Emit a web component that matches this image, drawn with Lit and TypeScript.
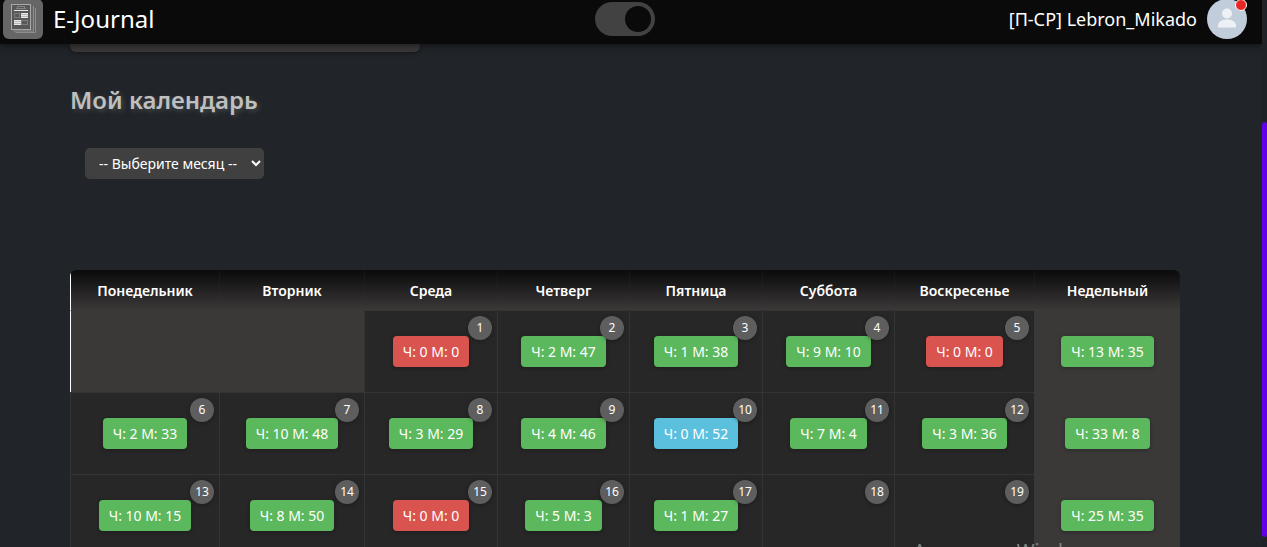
import { LitElement, html, css, svg, nothing } from "lit";
import { customElement } from "lit/decorators.js";

type Tone = "green" | "red" | "blue";
interface Entry {
  day?: number;
  text?: string;
  tone?: Tone;
}

const HEADINGS = ["Понедельник", "Вторник", "Среда", "Четверг", "Пятница", "Суббота", "Воскресенье", "Недельный"];

const d = (day: number, text?: string, tone: Tone = "green"): Entry => ({ day, text, tone });

const WEEKS: { skip: number; days: Entry[]; total: string }[] = [
  {
    skip: 2,
    days: [d(1, "Ч: 0 М: 0", "red"), d(2, "Ч: 2 М: 47"), d(3, "Ч: 1 М: 38"), d(4, "Ч: 9 М: 10"), d(5, "Ч: 0 М: 0", "red")],
    total: "Ч: 13 М: 35",
  },
  {
    skip: 0,
    days: [d(6, "Ч: 2 М: 33"), d(7, "Ч: 10 М: 48"), d(8, "Ч: 3 М: 29"), d(9, "Ч: 4 М: 46"), d(10, "Ч: 0 М: 52", "blue"), d(11, "Ч: 7 М: 4"), d(12, "Ч: 3 М: 36")],
    total: "Ч: 33 М: 8",
  },
  {
    skip: 0,
    days: [d(13, "Ч: 10 М: 15"), d(14, "Ч: 8 М: 50"), d(15, "Ч: 0 М: 0", "red"), d(16, "Ч: 5 М: 3"), d(17, "Ч: 1 М: 27"), d(18), d(19)],
    total: "Ч: 25 М: 35",
  },
];

@customElement("month-calendar")
export class MonthCalendar extends LitElement {
  static styles = css`
    :host {
      display: block;
    }
    .table {
      width: 100%;
      table-layout: fixed;
      border-collapse: separate;
      border-spacing: 0;
      border-radius: 6px 6px 0 0;
      overflow: hidden;
      background: #272727;
      color: #fff;
      font-size: 14px;
      line-height: 19px;
      text-align: center;
    }
    .c1 { width: 149px; }
    .c2 { width: 145px; }
    .c3 { width: 133px; }
    .c4 { width: 132px; }
    .c5 { width: 133px; }
    .c6 { width: 132px; }
    .c7 { width: 140px; }
    .c8 { width: 146px; }
    .head {
      box-sizing: border-box;
      height: 40px;
      padding: 0;
      border-left: 1px solid rgba(52, 52, 52, 0.2);
      background: linear-gradient(#0a0a0a, #3b3838);
      font-weight: 600;
    }
    .head:first-child {
      border-left: 1px solid #fff;
    }
    .cell {
      position: relative;
      box-sizing: border-box;
      height: 82px;
      padding: 0;
      border-left: 1px solid #343434;
      border-top: 1px solid #343434;
      vertical-align: middle;
    }
    .blank {
      background: #3b3838;
      border-top-color: #3b3838;
      border-left-color: #fff;
    }
    .total {
      background: #3b3838;
      border-color: #3b3838;
    }
    .badge {
      display: inline-block;
      padding: 6px 10px;
      border-radius: 4px;
      box-shadow: 0 1px 4px rgba(0, 0, 0, 0.3);
      vertical-align: middle;
      white-space: nowrap;
    }
    .green { background: #5cb85c; }
    .red { background: #d9534f; }
    .blue { background: #5bc0de; }
    .day {
      position: absolute;
      top: 5px;
      right: 5px;
      width: 24px;
      height: 24px;
      border-radius: 50%;
      background: #5e5e5e;
      box-shadow: 0 1px 4px rgba(0, 0, 0, 0.3);
      font-size: 12px;
      line-height: 24px;
    }
  `;

  render() {
    return html`
      <table class="table">
        <colgroup>
          ${HEADINGS.map((_, i) => html`<col class="c${i + 1}" />`)}
        </colgroup>
        <thead>
          <tr>${HEADINGS.map((h) => html`<th class="head" scope="col">${h}</th>`)}</tr>
        </thead>
        <tbody>
          ${WEEKS.map(
            (w) => html`<tr>
              ${w.skip ? html`<td class="cell blank" colspan=${w.skip}></td>` : nothing}
              ${w.days.map(
                (e) => html`<td class="cell">
                  ${e.text ? html`<span class="badge ${e.tone}">${e.text}</span>` : nothing}
                  <span class="day">${e.day}</span>
                </td>`
              )}
              <td class="cell total"><span class="badge green">${w.total}</span></td>
            </tr>`
          )}
        </tbody>
      </table>
    `;
  }
}

const logo = svg`
  <g fill="none" stroke="#8e8e8e">
    <path d="M12.500 33.500H32.500V9" />
    <path d="M10.500 32H30.500V7" />
    <rect x="8.500" y="5.500" width="19" height="25" fill="#585858" stroke="#a8a8a8" />
    <path d="M14.500 10V7.500H21.500V10M13 9.500H23" stroke="#858585" />
    <rect x="11.500" y="14.500" width="5" height="4" stroke="#7c7c7c" />
    <rect x="18.500" y="21.500" width="6" height="4" stroke="#7c7c7c" />
  </g>
  <path fill="#e8e8e8" d="M11 11h14v1H11zM18 14h7v1h-7zM18 16h7v1h-7zM18 18h7v1h-7zM11 21h7v1h-7zM11 23h7v1h-7zM11 25h7v1h-7z" />
  <path fill="#b8b8b8" d="M18 15h7v1h-7zM18 17h7v1h-7zM11 22h7v1h-7zM11 24h7v1h-7z" />
`;

@customElement("app-root")
export class AppRoot extends LitElement {
  static styles = css`
    :host {
      display: block;
      font-family: "Noto Sans", "Open Sans", sans-serif;
    }
    .page {
      position: relative;
      display: grid;
      grid-template-columns: minmax(0, 1fr) 5px;
      height: 100vh;
      overflow: hidden;
      background: #212529;
    }
    .view {
      display: flex;
      flex-direction: column;
      min-height: 0;
      overflow: hidden;
    }
    .bar {
      position: relative;
      box-sizing: border-box;
      flex: none;
      height: 44px;
      padding: 0 15px 6px 3px;
      display: grid;
      grid-template-columns: 1fr auto 1fr;
      align-items: center;
      background: #0a0a0a;
      box-shadow: 0 1px 8px rgba(0, 0, 0, 0.6);
      color: #fff;
    }
    .brand,
    .user {
      display: flex;
      align-items: center;
      gap: 10px;
      height: 38px;
      color: #fff;
      text-decoration: none;
      white-space: nowrap;
    }
    .brand {
      font-size: 24px;
      line-height: 32px;
    }
    .user {
      justify-content: flex-end;
      font-size: 18px;
    }
    .logo {
      flex: none;
      border-radius: 6px;
      background: #666;
    }
    .toggle {
      appearance: none;
      display: flex;
      justify-content: flex-end;
      box-sizing: border-box;
      width: 60px;
      height: 34px;
      margin: 0;
      padding: 4px;
      border-radius: 17px;
      background: #424242;
    }
    .toggle::before {
      content: "";
      width: 26px;
      height: 26px;
      border-radius: 50%;
      background: #0a0a0a;
    }
    .toggle:not(:checked) {
      justify-content: flex-start;
    }
    .avatar {
      position: relative;
      flex: none;
      width: 40px;
      height: 40px;
    }
    .face {
      display: block;
      border-radius: 50%;
      background: #c2cddb;
    }
    .dot {
      position: absolute;
      top: 0;
      right: 0;
      box-sizing: border-box;
      width: 12px;
      height: 12px;
      border: 1px solid #fff;
      border-radius: 50%;
      background: #e92525;
    }
    .content {
      box-sizing: border-box;
      width: 100%;
      padding: 0 82px 0 70px;
    }
    .card {
      max-width: 350px;
      height: 8px;
      border-radius: 0 0 6px 6px;
      background: #3b3838;
      box-shadow: 0 1px 4px rgba(0, 0, 0, 0.4);
    }
    .title {
      margin: 32px 0;
      color: #bfbfbf;
      font-size: 24px;
      line-height: 32px;
      font-weight: 600;
      text-shadow: 2px 2px 5px rgba(130, 130, 130, 0.4);
    }
    .filter {
      padding: 0 15px 91px;
    }
    .month {
      display: block;
      width: 179px;
      height: 31px;
      padding: 0 10px;
      border: none;
      border-radius: 5px;
      background: #404040;
      color: #fff;
      font: inherit;
      font-size: 14px;
    }
    .track {
      box-sizing: border-box;
      height: 100vh;
      padding: 122px 0 10px;
      background: #1f2226;
    }
    .thumb {
      height: 100%;
      border-radius: 3px;
      background: #6200ea;
    }
    .watermark {
      position: absolute;
      right: 169px;
      bottom: -17px;
      color: #848484;
      font-size: 19px;
      line-height: 26px;
    }
  `;

  render() {
    return html`
      <div class="page">
        <div class="view">
          <header class="bar">
            <a class="brand" href="#">
              <svg class="logo" width="40" height="40" viewBox="0 0 40 40" aria-hidden="true">${logo}</svg>
              <span>E-Journal</span>
            </a>
            <input class="toggle" type="checkbox" aria-label="Тёмная тема" checked />
            <a class="user" href="#">
              <span>[П-СР] Lebron_Mikado</span>
              <span class="avatar">
                <svg class="face" width="40" height="40" viewBox="0 0 40 40" aria-hidden="true">
                  <g fill="#edf1f5">
                    <circle cx="20" cy="14.500" r="5" />
                    <path d="M11 28.500V26.500C11 22 16.500 20.500 20 20.500S29 22 29 26.500V28.500Z" />
                  </g>
                </svg>
                <span class="dot"></span>
              </span>
            </a>
          </header>
          <main class="content">
            <div class="card"></div>
            <h2 class="title">Мой календарь</h2>
            <div class="filter">
              <select class="month" aria-label="Месяц">
                <option>-- Выберите месяц --</option>
              </select>
            </div>
            <month-calendar></month-calendar>
          </main>
        </div>
        <div class="track"><div class="thumb"></div></div>
        <div class="watermark">Активация Windows</div>
      </div>
    `;
  }
}
